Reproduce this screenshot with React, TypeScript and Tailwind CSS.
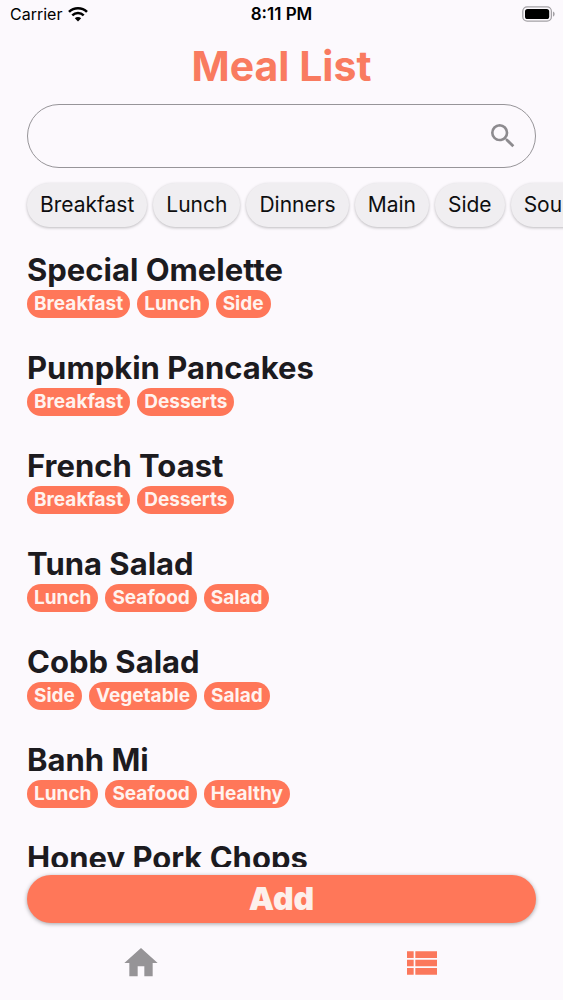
import { useState } from "react";
import { MdHome, MdSearch, MdViewList } from "react-icons/md";

const categories = ["Breakfast", "Lunch", "Dinners", "Main", "Side", "Soups"];

const meals = [
  { name: "Special Omelette", tags: ["Breakfast", "Lunch", "Side"] },
  { name: "Pumpkin Pancakes", tags: ["Breakfast", "Desserts"] },
  { name: "French Toast", tags: ["Breakfast", "Desserts"] },
  { name: "Tuna Salad", tags: ["Lunch", "Seafood", "Salad"] },
  { name: "Cobb Salad", tags: ["Side", "Vegetable", "Salad"] },
  { name: "Banh Mi", tags: ["Lunch", "Seafood", "Healthy"] },
  { name: "Honey Pork Chops", tags: ["Main", "Dinners"] },
];

function StatusBar() {
  return (
    <div className="grid h-7 shrink-0 grid-cols-3 items-center px-2 text-base text-black">
      <div className="flex items-center gap-1.5 pl-0.5">
        <span>Carrier</span>
        <svg viewBox="0 0 20 15" className="h-4 w-5" fill="none" stroke="currentColor">
          <path d="M1 5.4a13 13 0 0 1 18 0" strokeWidth="2.6" />
          <path d="M4.3 8.9a8.2 8.2 0 0 1 11.4 0" strokeWidth="2.5" />
          <path d="M10 15l-3.2-3.3a4.6 4.6 0 0 1 6.4 0z" fill="currentColor" stroke="none" />
        </svg>
      </div>
      <span className="text-center text-[17px] leading-7 font-semibold">8:11 PM</span>
      <svg viewBox="0 0 34 16" className="h-4 w-[34px] justify-self-end">
        <rect x="1.8" y="0.8" width="28.6" height="14.4" rx="4.4" fill="none" stroke="#a3a1a5" strokeWidth="1.3" />
        <rect x="4" y="3" width="24.2" height="10" rx="2.6" fill="#000" />
        <path d="M32 5.4c2.2.9 2.2 4.3 0 5.2z" fill="#a3a1a5" />
      </svg>
    </div>
  );
}

function Meal({ name, tags }: { name: string; tags: string[] }) {
  return (
    <li>
      <h2 className="text-[31px] leading-10 font-bold whitespace-nowrap text-[#1c1b1f]">
        {name}
      </h2>
      <div className="flex gap-[7px]">
        {tags.map((tag) => (
          <span
            key={tag}
            className="rounded-full bg-[#ff7759] px-[7px] text-[19px] leading-7 font-bold text-[#fff3ef]"
          >
            {tag}
          </span>
        ))}
      </div>
    </li>
  );
}

export default function App() {
  const [search, setSearch] = useState("");

  return (
    <div className="flex h-screen flex-col overflow-hidden bg-[#fcf9fd] font-['Inter',sans-serif]">
      <StatusBar />
      <h1 className="pt-3 text-center text-[41px] leading-[52px] font-bold text-[#f97b60]">
        Meal List
      </h1>
      <label className="mx-[27px] mt-3 flex h-16 shrink-0 items-center rounded-full border border-[#979599] pr-4 pl-6">
        <input
          type="text"
          aria-label="Search meals"
          value={search}
          onChange={(e) => setSearch(e.target.value)}
          className="min-w-0 flex-1 bg-transparent text-xl outline-none"
        />
        <MdSearch className="size-8 text-[#8d8b8f]" />
      </label>
      <div className="flex shrink-0 gap-1.5 overflow-hidden pt-[15px] pb-2 pl-[27px]">
        {categories.map((category) => (
          <button
            key={category}
            type="button"
            className="h-11 shrink-0 rounded-full bg-[#f0eef1] px-[13px] text-[21px] text-[#0e0e10] shadow-[0_1px_3px_rgba(0,0,0,0.25)]"
          >
            {category}
          </button>
        ))}
      </div>
      <ul className="flex min-h-0 flex-1 flex-col gap-[30px] overflow-hidden px-[27px] pt-[15px]">
        {meals.map((meal) => (
          <Meal key={meal.name} name={meal.name} tags={meal.tags} />
        ))}
      </ul>
      <button
        type="button"
        className="mx-[27px] mt-2 h-12 shrink-0 rounded-full bg-[#ff7759] text-[32px] font-black text-[#fdefeb] shadow-[0_1px_4px_rgba(0,0,0,0.35)]"
      >
        Add
      </button>
      <nav className="grid h-[77px] shrink-0 grid-cols-2 justify-items-center">
        <a href="#home" aria-label="Home" className="pt-5 text-[#969497]">
          <MdHome className="size-10" />
        </a>
        <a href="#meals" aria-label="Meal list" className="pt-5 text-[#fb785c]">
          <MdViewList className="size-10" />
        </a>
      </nav>
    </div>
  );
}
